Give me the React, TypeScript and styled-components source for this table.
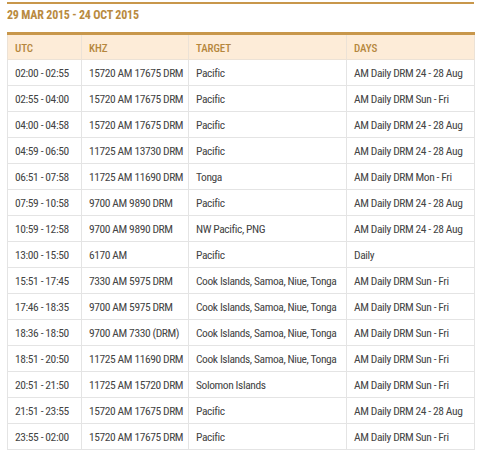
import React from "react";
import styled, { createGlobalStyle } from "styled-components";

const GlobalStyle = createGlobalStyle`
  html, body { margin: 0; padding: 0; background: #ffffff; }
  body { font-family: "Roboto Condensed", Roboto, "Liberation Sans", sans-serif; }
`;

const Page = styled.div`
  padding: 2px 6px 0 7px;
  width: 467px;
`;

const Section = styled.section`
  border-top: 2px solid #c8974b;
`;

const Title = styled.h2`
  margin: 0;
  padding: 2px 0 0;
  height: 28px;
  box-sizing: border-box;
  font-size: 12px;
  line-height: 18px;
  font-weight: 700;
  letter-spacing: -0.2px;
  color: #b98a40;
`;

const Table = styled.table`
  width: 467px;
  border-collapse: collapse;
  table-layout: fixed;
  border-top: 3px solid #c8974b;
`;

const HeadRow = styled.tr`
  background: #fdecd8;
`;

const HeadCell = styled.th<{ $w: number }>`
  width: ${(p) => p.$w}px;
  height: 26px;
  padding: 2px 7px 0;
  text-align: left;
  font-family: "Roboto Condensed", Roboto, sans-serif;
  font-size: 11px;
  font-weight: 500;
  letter-spacing: -0.1px;
  color: #b5873d;
  border: 1px solid #ece2d6;
  border-top: none;
  box-sizing: border-box;
`;

const Cell = styled.td`
  height: 26px;
  padding: 0 7px;
  font-family: "Roboto Condensed", Roboto, sans-serif;
  font-size: 11.5px;
  font-weight: 400;
  letter-spacing: -0.4px;
  color: #444444;
  white-space: nowrap;
  border: 1px solid #e4e4e4;
  box-sizing: border-box;
`;

const columns: [string, number][] = [
  ["UTC", 74],
  ["KHZ", 107],
  ["TARGET", 158],
  ["DAYS", 128],
];

const rows: string[][] = [
  ["02:00 - 02:55", "15720 AM 17675 DRM", "Pacific", "AM Daily DRM 24 - 28 Aug"],
  ["02:55 - 04:00", "15720 AM 17675 DRM", "Pacific", "AM Daily DRM Sun - Fri"],
  ["04:00 - 04:58", "15720 AM 17675 DRM", "Pacific", "AM Daily DRM 24 - 28 Aug"],
  ["04:59 - 06:50", "11725 AM 13730 DRM", "Pacific", "AM Daily DRM 24 - 28 Aug"],
  ["06:51 - 07:58", "11725 AM 11690 DRM", "Tonga", "AM Daily DRM Mon - Fri"],
  ["07:59 - 10:58", "9700 AM 9890 DRM", "Pacific", "AM Daily DRM 24 - 28 Aug"],
  ["10:59 - 12:58", "9700 AM 9890 DRM", "NW Pacific, PNG", "AM Daily DRM 24 - 28 Aug"],
  ["13:00 - 15:50", "6170 AM", "Pacific", "Daily"],
  ["15:51 - 17:45", "7330 AM 5975 DRM", "Cook Islands, Samoa, Niue, Tonga", "AM Daily DRM Sun - Fri"],
  ["17:46 - 18:35", "9700 AM 5975 DRM", "Cook Islands, Samoa, Niue, Tonga", "AM Daily DRM Sun - Fri"],
  ["18:36 - 18:50", "9700 AM 7330 (DRM)", "Cook Islands, Samoa, Niue, Tonga", "AM Daily DRM Sun - Fri"],
  ["18:51 - 20:50", "11725 AM 11690 DRM", "Cook Islands, Samoa, Niue, Tonga", "AM Daily DRM Sun - Fri"],
  ["20:51 - 21:50", "11725 AM 15720 DRM", "Solomon Islands", "AM Daily DRM Sun - Fri"],
  ["21:51 - 23:55", "15720 AM 17675 DRM", "Pacific", "AM Daily DRM 24 - 28 Aug"],
  ["23:55 - 02:00", "15720 AM 17675 DRM", "Pacific", "AM Daily DRM Sun - Fri"],
];

export default function App() {
  return (
    <>
      <GlobalStyle />
      <Page>
        <Section>
          <Title>29 MAR 2015 - 24 OCT 2015</Title>
          <Table>
            <thead>
              <HeadRow>
                {columns.map(([label, w]) => (
                  <HeadCell key={label} $w={w}>
                    {label}
                  </HeadCell>
                ))}
              </HeadRow>
            </thead>
            <tbody>
              {rows.map((r) => (
                <tr key={r[0]}>
                  {r.map((c, i) => (
                    <Cell key={i}>{c}</Cell>
                  ))}
                </tr>
              ))}
            </tbody>
          </Table>
        </Section>
      </Page>
    </>
  );
}
